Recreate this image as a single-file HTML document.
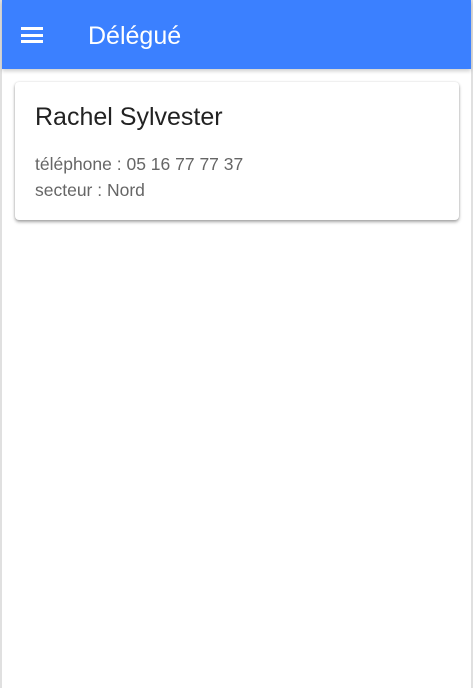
<!DOCTYPE html>
<html><head><style>
body{margin:0;width:473px;height:688px;background:#fff;font-family:"Liberation Sans",sans-serif;position:relative;overflow:hidden}
.frame{position:absolute;left:0;top:0;width:469px;height:688px;border-left:2px solid #e0e0e0;border-right:2px solid #e0e0e0}
.bar{position:absolute;left:2px;top:0;width:469px;height:69px;background:#3b80ff;box-shadow:0 2px 4px rgba(0,0,0,.2)}
.ham{position:absolute;left:19px;width:22px;height:2.5px;background:#fff}
.title{position:absolute;left:86px;top:22px;color:#fff;font-size:25px}
.card{position:absolute;left:15px;top:82px;width:444px;height:138px;background:#fff;border-radius:4px;box-shadow:0 2px 3px rgba(0,0,0,.35),0 0 2px rgba(0,0,0,.12)}
.name{position:absolute;left:20px;top:21px;font-size:25px;color:#222}
.l{position:absolute;left:20px;font-size:17.5px;color:#666}
</style></head><body>
<div class="frame"></div>
<div class="bar">
<div class="ham" style="top:27px"></div><div class="ham" style="top:34px"></div><div class="ham" style="top:40px"></div>
<div class="title">Délégué</div>
</div>
<div class="card">
<div class="name">Rachel Sylvester</div>
<div class="l" style="top:72px">téléphone : 05 16 77 77 37</div>
<div class="l" style="top:98px">secteur : Nord</div>
</div>
</body></html>
